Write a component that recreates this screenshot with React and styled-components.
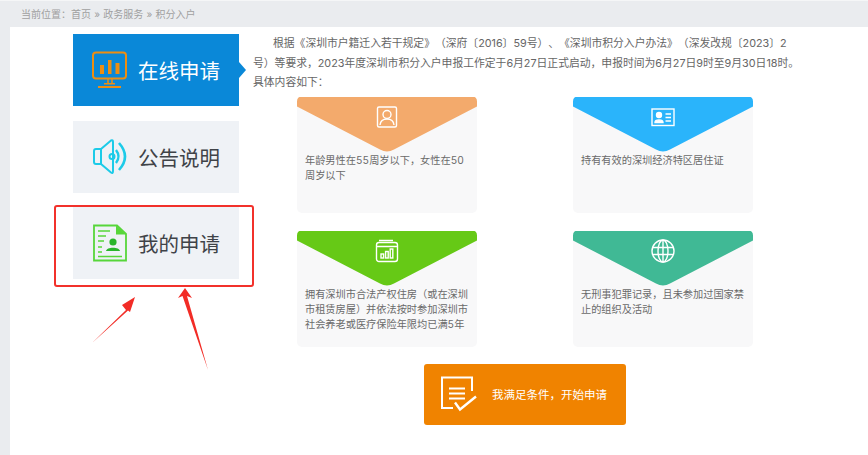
import React from "react";
import styled, { createGlobalStyle } from "styled-components";

const GlobalStyle = createGlobalStyle`
  html, body {
    margin: 0;
    padding: 0;
    background: #eaecef;
    font-family: Inter, "Noto Sans CJK SC", "Noto Sans", sans-serif;
    text-spacing-trim: space-all;
  }
`;

const Page = styled.div`
  width: 868px;
  height: 455px;
  overflow: hidden;
  display: flex;
  flex-direction: column;
  background: #eaecef;
`;

const Crumbs = styled.div`
  height: 27px;
  flex: none;
  box-sizing: border-box;
  padding: 0 0 0 21px;
  border-top: 1px solid #f5f6f7;
  font-size: 10px;
  line-height: 26px;
  word-spacing: 0.4px;
  color: #a0a0a0;
`;

const Panel = styled.div`
  flex: 1;
  margin-left: 10px;
  background: #fff;
  display: flex;
  padding: 7px 0 0 63px;
`;

const Side = styled.div`
  position: relative;
  width: 166px;
  flex: none;
  display: flex;
  flex-direction: column;
  gap: 14.5px;
`;

const NavItem = styled.div`
  position: relative;
  height: 72px;
  display: flex;
  align-items: center;
  gap: 9px;
  padding-left: 18px;
  font-size: 20.5px;
  color: ${(p) => (p.$active ? "#fff" : "#3f4348")};
  background: ${(p) => (p.$active ? "#0a88d8" : "#eff2f6")};

  ${(p) =>
    p.$active &&
    `
    &::after {
      content: "";
      position: absolute;
      left: 100%;
      top: 28px;
      border-left: 7px solid #0a88d8;
      border-top: 8px solid transparent;
      border-bottom: 8px solid transparent;
    }
  `}
`;

const NavIcon = styled.svg`
  width: 38px;
  height: 38px;
  flex: none;
  fill: none;
`;

const RedBox = styled.div`
  position: absolute;
  left: -19px;
  top: -2px;
  width: 200px;
  height: 82px;
  box-sizing: border-box;
  border: 2px solid #f2312b;
  border-radius: 3px;
`;

const Arrows = styled.svg`
  position: absolute;
  left: 0;
  top: 251px;
  width: 166px;
  height: 100px;
  overflow: visible;
`;

const Main = styled.div`
  width: 566px;
  margin-left: 14px;
  flex: none;
`;

const Intro = styled.p`
  margin: 0;
  font-size: 10.8px;
  line-height: 19.5px;
  color: #666;
  white-space: pre-line;
`;

const IntroIndent = styled.span`
  display: inline-block;
  width: 20px;
`;

const Cards = styled.div`
  display: grid;
  grid-template-columns: 180px 180px;
  grid-auto-rows: 116px;
  column-gap: 96px;
  row-gap: 18px;
  margin: 4px 0 0 44px;
`;

const Card = styled.div`
  background: #f8f8f9;
  border-radius: 5px;
  font-size: 10.2px;
  line-height: 15px;
  color: #6a6a6a;
  font-feature-settings: "tnum";
`;

const Flap = styled.div`
  height: 56px;
  display: flex;
  justify-content: center;
  padding-top: 8px;
  box-sizing: border-box;
  background: ${(p) => p.$color};
  clip-path: path("M0 5 Q0 0 5 0 L175 0 Q180 0 180 5 L180 10 L97 53 Q90 57 83 53 L0 10 Z");
`;

const FlapIcon = styled.svg`
  width: 24px;
  height: 24px;
  fill: none;
  stroke: #fff;
  stroke-width: 1.4;
`;

const CardText = styled.div`
  padding: 0 8px;
`;

const Apply = styled.div`
  width: 202px;
  height: 61px;
  margin: 17px 0 0 171px;
  border-radius: 3px;
  background: #f08300;
  display: flex;
  align-items: center;
  gap: 15px;
  padding-left: 17px;
  box-sizing: border-box;
  color: #fff;
  font-size: 11.5px;
`;

const ApplyIcon = styled.svg`
  width: 36px;
  height: 38px;
  flex: none;
  fill: none;
  stroke: #fff;
  stroke-width: 2;
`;

const items = [
  {
    color: "#f3aa6c",
    text: "年龄男性在55周岁以下，女性在50周岁以下",
    icon: (
      <>
        <rect x="2.5" y="2" width="19" height="20" rx="1.5" />
        <circle cx="12" cy="9.5" r="4" />
        <path d="M5 20 C5.5 15.5 8.5 14 12 14 C15.5 14 18.5 15.5 19 20" />
      </>
    ),
  },
  {
    color: "#2ab4fb",
    text: "持有有效的深圳经济特区居住证",
    icon: (
      <>
        <rect x="1" y="4" width="22" height="16.5" />
        <circle cx="8" cy="10" r="2.5" fill="#fff" />
        <path d="M4 17.5 C4 14 12 14 12 17.5 Z" fill="#fff" />
        <path d="M14.5 9 H20 M14.5 12.5 H20 M14.5 16 H20" />
      </>
    ),
  },
  {
    color: "#66c916",
    text: "拥有深圳市合法产权住房（或在深圳市租赁房屋）并依法按时参加深圳市社会养老或医疗保险年限均已满5年",
    icon: (
      <>
        <rect x="1.5" y="3.5" width="21" height="19" rx="2.5" />
        <path d="M4 1.5 H18 M1.5 7.5 H22.5" />
        <rect x="6" y="15" width="2.6" height="4" />
        <rect x="10.6" y="12.5" width="2.6" height="6.5" />
        <rect x="15.2" y="10" width="2.6" height="9" />
      </>
    ),
  },
  {
    color: "#40b995",
    text: "无刑事犯罪记录，且未参加过国家禁止的组织及活动",
    icon: (
      <>
        <circle cx="12" cy="12" r="11" />
        <ellipse cx="12" cy="12" rx="5" ry="11" />
        <path d="M12 1 V23 M1.5 8.5 H22.5 M1.5 15.5 H22.5" />
      </>
    ),
  },
];

const App = () => {
  return (
    <Page>
      <GlobalStyle />
      <Crumbs>当前位置：首页 » 政务服务 » 积分入户</Crumbs>
      <Panel>
        <Side>
          <NavItem $active>
            <NavIcon viewBox="0 0 38 38">
              <rect x="2" y="1.5" width="33" height="26" rx="3" stroke="#ed8e12" strokeWidth="2" />
              <path d="M9 14 h4 v9 h-4z M17 9 h3.5 v14 h-3.5z M24.5 12 h4 v11 h-4z" fill="#ed8e12" />
              <path d="M17 28 v4 M21 28 v4" stroke="#ed8e12" strokeWidth="1.5" />
              <path d="M13 32 h11 v1.5 h-11z M7 35 h23 v2 h-23z" fill="#ed8e12" />
            </NavIcon>
            在线申请
          </NavItem>
          <NavItem>
            <NavIcon viewBox="0 0 38 38">
              <g stroke="#1ccbe8" strokeWidth="2" strokeLinejoin="round">
                <path d="M3 13 Q3 11 5 11 H10 L20 2.5 Q22 1.5 22 4 V33 Q22 36 20 34.5 L10 26 H5 Q3 26 3 24 Z" />
                <path d="M10 11 V26" />
                <circle cx="21" cy="18.5" r="2.5" />
                <path d="M25 12 Q30 18.5 25 25" strokeWidth="2.4" />
                <path d="M28 5 Q40 18.5 28 32" strokeWidth="2.6" />
              </g>
            </NavIcon>
            公告说明
          </NavItem>
          <NavItem>
            <NavIcon viewBox="0 0 38 38">
              <path d="M3 1.5 H26 L35 10 V36.5 H3 Z" stroke="#57d63a" strokeWidth="1.8" />
              <path d="M25 1.5 L35 10.5 H25 Z" fill="#57d63a" />
              <path d="M7 7 H19 M7 12 H15 M7 17 H13 M7 23 H11 M7 28 H11 M7 32.5 H31" stroke="#57d63a" strokeWidth="1.4" />
              <circle cx="22" cy="18" r="3.6" fill="#29b52b" />
              <path d="M15 27 C15.5 22.5 28.5 22.5 29 27 Z" fill="#29b52b" />
            </NavIcon>
            我的申请
            <RedBox />
          </NavItem>
          <Arrows viewBox="0 0 166 100">
            <path d="M19 58 L53 25 L49 20 L62 12 L57 27 L55 25.5 Z" fill="#f22c26" />
            <path d="M135 85 L109.5 11 L105 13 L112 3 L119 13 L114 11 Z" fill="#f22c26" />
          </Arrows>
        </Side>
        <Main>
          <Intro>
            <IntroIndent />
            {"根据《深圳市户籍迁入若干规定》（深府〔2016〕59号）、《深圳市积分入户办法》（深发改规〔2023〕2\n号）等要求，2023年度深圳市积分入户申报工作定于6月27日正式启动，申报时间为6月27日9时至9月30日18时。\n具体内容如下："}
          </Intro>
          <Cards>
            {items.map((item) => (
              <Card key={item.color}>
                <Flap $color={item.color}>
                  <FlapIcon viewBox="0 0 24 24">{item.icon}</FlapIcon>
                </Flap>
                <CardText>{item.text}</CardText>
              </Card>
            ))}
          </Cards>
          <Apply>
            <ApplyIcon viewBox="0 0 36 38">
              <path d="M31 16 V2.5 H1 V33 H12" />
              <path d="M8 13.5 H24 M8 18.5 H24 M8 23.5 H24" />
              <path d="M14 27.5 L19 34.5 L35 21.5" strokeWidth="2.4" />
            </ApplyIcon>
            我满足条件，开始申请
          </Apply>
        </Main>
      </Panel>
    </Page>
  );
};

export default App;
